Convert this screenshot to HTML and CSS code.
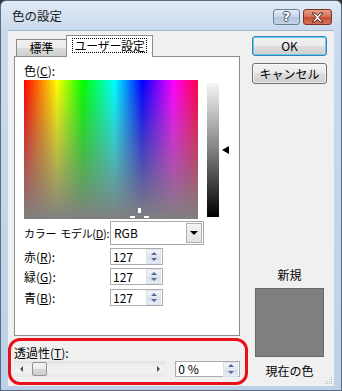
FILE: index.html
```html
<!DOCTYPE html>
<html>
<head>
<meta http-equiv="Content-Type" content="text/html; charset=utf-8">
<title>色の設定</title>
<link rel="stylesheet" href="styles.css">
</head>

<body>

<div class="window">
  <div class="titlebar">
    <span class="titlebar__text">色の設定</span>
    <div class="titlebar__btns">
      <span class="cap cap--help">?</span>
      <span class="cap cap--close">
        <svg width="13" height="11" viewBox="0 0 13 11"><path d="M1 1h3l2.5 2.8L9 1h3L8 5.5 12 10H9L6.5 7.2 4 10H1l4-4.5z" fill="#fff" stroke="#5a1f14" stroke-width="1" stroke-linejoin="round"/></svg>
      </span>
    </div>
  </div>

  <div class="client">
    <div class="col-left">
      <div class="tabs">
        <span class="tab">標準</span>
        <span class="tab tab--active"><span class="tab__focus">ユーザー設定</span></span>
      </div>

      <div class="panel">
        <p class="lbl">色(<u>C</u>):</p>
        <div class="picker">
          <div class="spectrum">
            <span class="cross cross--v"></span>
            <span class="cross cross--l"></span>
            <span class="cross cross--r"></span>
          </div>
          <div class="lum"></div>
          <div class="lum__arrow"></div>
        </div>

        <div class="row row--model">
          <span class="row__lbl row__lbl--tight">カラー モデル(<u>D</u>):</span>
          <div class="combo">
            <span class="combo__val">RGB</span>
            <span class="combo__btn"><i class="tri-down"></i></span>
          </div>
        </div>
        <div class="row">
          <span class="row__lbl">赤(<u>R</u>):</span>
          <div class="spin"><span class="spin__val">127</span><span class="spin__btns"><i class="sp-up"></i><i class="sp-dn"></i></span></div>
        </div>
        <div class="row">
          <span class="row__lbl">緑(<u>G</u>):</span>
          <div class="spin"><span class="spin__val">127</span><span class="spin__btns"><i class="sp-up"></i><i class="sp-dn"></i></span></div>
        </div>
        <div class="row row--last">
          <span class="row__lbl">青(<u>B</u>):</span>
          <div class="spin"><span class="spin__val">127</span><span class="spin__btns"><i class="sp-up"></i><i class="sp-dn"></i></span></div>
        </div>
      </div>

      <div class="trans">
        <p class="lbl">透過性(<u>T</u>):</p>
        <div class="trans__row">
          <div class="slider">
            <i class="arr-l"></i>
            <span class="slider__thumb"></span>
            <i class="arr-r"></i>
          </div>
          <div class="spin spin--pct"><span class="spin__val">0 %</span><span class="spin__btns"><i class="sp-up"></i><i class="sp-dn"></i></span></div>
        </div>
        <span class="mark"></span>
      </div>
    </div>

    <div class="col-right">
      <span class="btn btn--default">OK</span>
      <span class="btn btn--cancel">キャンセル</span>
      <div class="preview">
        <p class="preview__lbl">新規</p>
        <div class="preview__box"></div>
        <p class="preview__lbl preview__lbl--cur">現在の色</p>
      </div>
      <svg class="grip" width="8" height="8" viewBox="0 0 8 8"><g fill="#a9b7c8"><rect x="6" y="0" width="1" height="1"/><rect x="4" y="2" width="1" height="1"/><rect x="6" y="2" width="1" height="1"/><rect x="2" y="4" width="1" height="1"/><rect x="4" y="4" width="1" height="1"/><rect x="6" y="4" width="1" height="1"/><rect x="0" y="6" width="1" height="1"/><rect x="2" y="6" width="1" height="1"/><rect x="4" y="6" width="1" height="1"/><rect x="6" y="6" width="1" height="1"/></g></svg>
    </div>
  </div>
</div>

</body>
</html>
```

FILE: styles.css
```css
/* reset */
*{box-sizing:border-box}
html,body,p{margin:0;padding:0}
i{display:block}
u{text-decoration:underline;text-underline-offset:1px}

body{background:#2f3236;font-family:"Noto Sans CJK JP","Noto Sans",sans-serif;font-size:12px;line-height:14px;color:#000;width:342px;height:391px;overflow:hidden;white-space:nowrap}

/* window frame */
.window{width:342px;height:391px;display:flex;flex-direction:column;border:1px solid #5b6b80;border-radius:6px 6px 0 0;background:linear-gradient(#e2ebf6,#c9daee 29px,#bcd1e9);padding:0 7px 4px 7px}
.titlebar{height:29px;display:flex;align-items:center;justify-content:space-between}
.titlebar__text{padding-left:4px;font-size:12.5px;color:#1b1b1b}
.titlebar__btns{display:flex;gap:3px;align-self:flex-start;margin-top:8px;margin-right:2px}
.cap{height:16px;display:flex;align-items:center;justify-content:center;border:1px solid #6d7f97;border-radius:3px}
.cap--help{width:27px;background:linear-gradient(#e6eef7,#c5d5e7 50%,#b3c6dd 50%,#c2d3e6);font:bold 13px/14px "DejaVu Sans",sans-serif;color:#fff;text-shadow:1px 0 #40506a,-1px 0 #40506a,0 1px #40506a,0 -1px #40506a}
.cap--close{width:29px;border-color:#7c3124;background:linear-gradient(#e6a08e,#d46d54 50%,#c44a30 50%,#d3765c)}

/* client area */
.client{flex:1;display:flex;background:#f0f0f0;padding:4px 7px 0 6px;border-top:1px solid #a2b6cc}
.col-left{width:226px;display:flex;flex-direction:column}

/* tabs */
.tabs{height:21px;display:flex;align-items:flex-end;padding-left:2px}
.tab{height:17px;width:51px;display:flex;align-items:center;justify-content:center;border:1px solid #898c95;border-bottom:0;background:linear-gradient(#f2f2f2,#ebebeb 50%,#dddddd 50%,#cfcfcf)}
.tab--active{position:relative;z-index:1;height:22px;width:87px;margin-left:-1px;margin-bottom:-1px;background:#fff}
.tab__focus{border:1px dotted #000;padding:0 1px;line-height:13px;width:75px;text-align:center;margin-top:-2px;letter-spacing:-.3px}

/* panel */
.panel{height:280px;border:1px solid #898c95;background:#fff;padding:7px 8px 0 9px}
.lbl{line-height:14px}
.picker{display:flex;align-items:flex-start;margin-top:2px;height:139px}
.spectrum{position:relative;width:174px;height:139px;flex:none;background:linear-gradient(rgba(128,128,128,0),#808080),linear-gradient(90deg,#f00 0%,#ff0 19%,#0f0 34%,#0ff 52%,#00f 68%,#f0f 86%,#f04 100%)}
.cross{position:absolute;background:#fff}
.cross--v{left:114px;top:128px;width:3px;height:5px}
.cross--l{left:106px;top:136px;width:5px;height:2px}
.cross--r{left:120px;top:136px;width:5px;height:2px}
.lum{width:12px;height:134px;margin:3px 0 0 9px;background:linear-gradient(#f6f6f6,#808080 50%,#000)}
.lum__arrow{width:0;height:0;margin:66px 0 0 3px;border-right:7px solid #000;border-top:4px solid transparent;border-bottom:4px solid transparent}

.row{display:flex;align-items:center;margin-top:3px}
.row--model{margin-top:2px}
.row--last{margin-top:4px}
.row__lbl{width:86px;flex:none}
.row__lbl--tight{font-size:11px;letter-spacing:-.3px;word-spacing:2px}
.combo{width:94px;height:24px;display:flex;align-items:center;justify-content:space-between;border:1px solid #a9a9a9;padding:1px 1px 1px 3px}
.combo__val{line-height:14px}
.combo__btn{width:16px;height:100%;display:flex;align-items:center;justify-content:center;border:1px solid #b2b2b2;background:linear-gradient(#f4f4f4,#e2e2e2)}
.tri-down{border-top:4px solid #000;border-left:4px solid transparent;border-right:4px solid transparent}

.spin{width:53px;height:17px;display:flex;align-items:center;justify-content:space-between;border:1px solid #abadb3;background:#fff;padding:0 1px 0 2px}
.spin__val{line-height:14px}
.spin__btns{width:15px;height:15px;display:flex;flex-direction:column;align-items:center;justify-content:space-around;background:linear-gradient(#f3f5f8,#e1e6ed 50%,#d6dde7 50%,#e7ecf1);border:1px solid #dde3ea}
.sp-up{border-bottom:3px solid #4f6a9b;border-left:3px solid transparent;border-right:3px solid transparent}
.sp-dn{border-top:3px solid #4f6a9b;border-left:3px solid transparent;border-right:3px solid transparent}

/* transparency */
.trans{position:relative;flex:1;padding-top:10px}
.trans__row{display:flex;align-items:center;margin-top:1px}
.slider{width:152px;height:16px;display:flex;align-items:center;padding:0 5px 0 6px;background:linear-gradient(#e3e3e3,#f1f1f1 40%,#f1f1f1 70%,#e6e6e6)}
.arr-l{border-right:3px solid #505050;border-top:3px solid transparent;border-bottom:3px solid transparent}
.arr-r{margin-left:auto;border-left:3px solid #505050;border-top:3px solid transparent;border-bottom:3px solid transparent}
.slider__thumb{width:15px;height:14px;margin-left:9px;border:1px solid #959595;border-radius:2px;background:linear-gradient(#f6f6f6,#e9e9e9 50%,#d9d9d9 50%,#d0d0d0)}
.spin--pct{width:65px;height:16px;margin-left:10px}
.mark{position:absolute;left:-6px;right:-8px;top:2px;bottom:1px;border:3px solid #e8101c;border-radius:12px}

/* right column */
.col-right{position:relative;flex:1;display:flex;flex-direction:column;padding-left:12px}
.btn{width:75px;height:20px;display:flex;align-items:center;justify-content:center;border:1px solid #707070;border-radius:3px;background:linear-gradient(#f2f2f2,#ebebeb 50%,#dddddd 50%,#cfcfcf);box-shadow:inset 0 0 0 1px rgba(255,255,255,.6)}
.btn--default{margin-top:1px;border-color:#3c7fb1;box-shadow:inset 0 0 0 1px #5fd0f5}
.btn--cancel{margin-top:7px;height:21px}
.preview{margin-top:auto;padding-bottom:8px;display:flex;flex-direction:column;align-items:center;width:75px}
.preview__lbl{line-height:14px}
.preview__box{width:69px;height:69px;margin:6px 0 7px;border:1px solid #686868;background:#7f7f7f}
.grip{position:absolute;right:-6px;bottom:1px}
```
